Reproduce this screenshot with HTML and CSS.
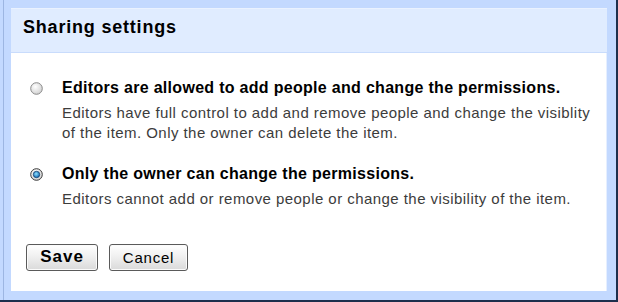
FILE: index.html
```html
<!DOCTYPE html>
<html>
<head>
<meta charset="utf-8">
<link rel="stylesheet" href="styles.css">
</head>
<body>
<div class="frame">
  <div class="panel">
    <div class="header">Sharing settings</div>
    <div class="body">
      <div class="option">
        <svg class="radio" width="13" height="13" viewBox="0 0 13 13">
          <defs>
            <radialGradient id="rg1" cx="40%" cy="35%" r="70%">
              <stop offset="0" stop-color="#ffffff"/>
              <stop offset="1" stop-color="#cfcfcf"/>
            </radialGradient>
          </defs>
          <circle cx="6.5" cy="6.5" r="5.8" fill="url(#rg1)" stroke="#8a8a8a" stroke-width="1"/>
        </svg>
        <div class="text">
          <div class="title">Editors are allowed to add people and change the permissions.</div>
          <div class="desc">Editors have full control to add and remove people and change the visiblity of the item. Only the owner can delete the item.</div>
        </div>
      </div>
      <div class="option">
        <svg class="radio" width="13" height="13" viewBox="0 0 13 13">
          <defs>
            <radialGradient id="rg2" cx="40%" cy="35%" r="70%">
              <stop offset="0" stop-color="#ffffff"/>
              <stop offset="1" stop-color="#cfcfcf"/>
            </radialGradient>
            <radialGradient id="rb" cx="45%" cy="40%" r="60%">
              <stop offset="0" stop-color="#8fe0ff"/>
              <stop offset="1" stop-color="#0b66b0"/>
            </radialGradient>
          </defs>
          <circle cx="6.5" cy="6.5" r="5.8" fill="url(#rg2)" stroke="#3a3a3a" stroke-width="1"/>
          <circle cx="6.5" cy="6.5" r="3.2" fill="url(#rb)" stroke="#16406e" stroke-width="0.8"/>
        </svg>
        <div class="text">
          <div class="title">Only the owner can change the permissions.</div>
          <div class="desc">Editors cannot add or remove people or change the visibility of the item.</div>
        </div>
      </div>
      <div class="buttons">
        <button class="btn btn-save">Save</button>
        <button class="btn btn-cancel">Cancel</button>
      </div>
    </div>
  </div>
</div>
</body>
</html>
```
FILE: styles.css
```css
html, body {
  margin: 0;
  padding: 0;
  background: #c3d9ff;
}
.frame {
  box-sizing: border-box;
  width: 618px;
  height: 302px;
  padding: 8px 9px 9px 11px;
  background: linear-gradient(to right, #c3d9ff 0, #c3d9ff 3px, #9db6e2 3px, #9db6e2 4px, #c3d9ff 4px);
  border-right: 2px solid #1d2f4d;
  border-bottom: 2px solid #1d2f4d;
  font-family: "Liberation Sans", Arial, sans-serif;
}
.panel {
  height: 100%;
  background: #ffffff;
  box-shadow: inset -1px 0 0 #e6efff;
}
.header {
  box-sizing: border-box;
  height: 45px;
  padding: 8px 12px 0;
  background: #e0ecff;
  border-top: 1px solid #eaf2ff;
  border-bottom: 1px solid #c9dcfc;
  font-size: 18px;
  letter-spacing: 0.8px;
  line-height: 20px;
  font-weight: bold;
  color: #000;
}
.body {
  padding: 25px 4px 0 19px;
}
.option {
  display: grid;
  grid-template-columns: 13px 1fr;
  column-gap: 19px;
  margin-bottom: 22px;
}
.radio {
  display: block;
  margin-top: 4px;
}
.title {
  font-size: 16px;
  letter-spacing: 0.3px;
  line-height: 19px;
  font-weight: bold;
  color: #000;
  margin-bottom: 6px;
}
.desc {
  font-size: 15px;
  letter-spacing: 0.45px;
  line-height: 19.5px;
  color: #3c3c3c;
}
.buttons {
  display: flex;
  gap: 11px;
  margin-top: 35px;
  margin-left: -4px;
}
.btn {
  box-sizing: border-box;
  height: 27px;
  padding: 0;
  border: 1px solid #5a5a5a;
  border-radius: 3px;
  background: linear-gradient(#ffffff, #f0f0f0 45%, #dadada);
  box-shadow: inset 0 0 0 1px #fbfbfb;
  font-family: "Liberation Sans", Arial, sans-serif;
  color: #000;
}
.btn-save {
  width: 72px;
  font-size: 17px;
  letter-spacing: 1px;
  font-weight: bold;
}
.btn-cancel {
  width: 79px;
  font-size: 15px;
  letter-spacing: 0.8px;
}
```
